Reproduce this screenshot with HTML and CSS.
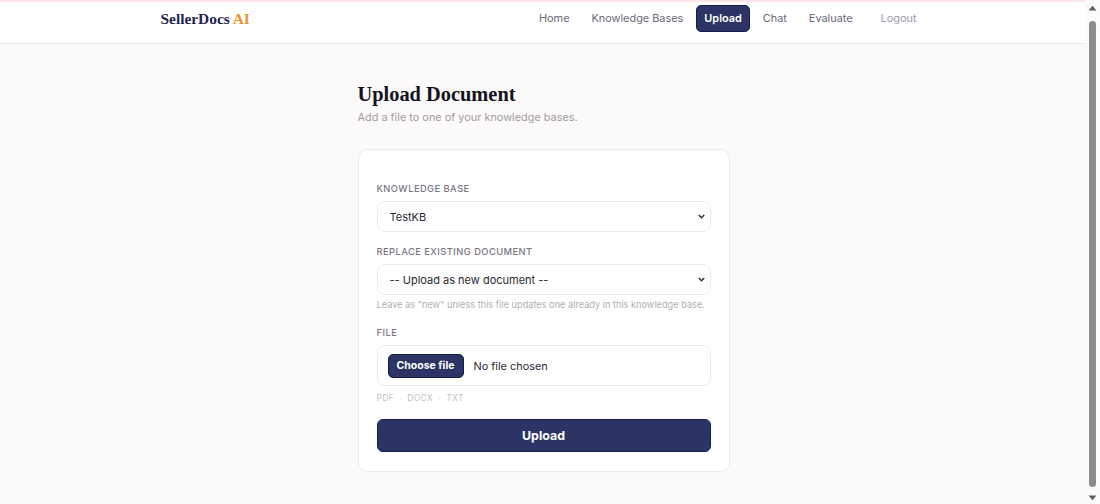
FILE: index.html
```html
<!DOCTYPE html>
<html lang="en">
<head>
<meta charset="utf-8">
<title>Upload Document - SellerDocs AI</title>
<link rel="stylesheet" href="styles.css">
</head>
<body>
<header class="site-header">
  <div class="container header-inner">
    <a class="logo" href="#">SellerDocs <span class="logo-ai">AI</span></a>
    <nav class="nav">
      <a class="nav-link" href="#">Home</a>
      <a class="nav-link" href="#">Knowledge Bases</a>
      <a class="nav-link active" href="#">Upload</a>
      <a class="nav-link" href="#">Chat</a>
      <a class="nav-link" href="#">Evaluate</a>
      <a class="nav-link logout" href="#">Logout</a>
    </nav>
  </div>
</header>
<main class="main">
  <div class="page">
    <h1 class="page-title">Upload Document</h1>
    <p class="page-sub">Add a file to one of your knowledge bases.</p>
    <form class="card">
      <div class="field field-first">
        <label class="label" for="kb">Knowledge base</label>
        <div class="select-wrap">
          <select id="kb" class="select"><option>TestKB</option></select>
          <svg class="chev" width="7" height="5" viewBox="0 0 7 5"><path d="M0.8 0.9 L3.5 3.7 L6.2 0.9" fill="none" stroke="#2a2a35" stroke-width="1.4"/></svg>
        </div>
      </div>
      <div class="field">
        <label class="label" for="rep">Replace existing document</label>
        <div class="select-wrap">
          <select id="rep" class="select"><option>-- Upload as new document --</option></select>
          <svg class="chev" width="7" height="5" viewBox="0 0 7 5"><path d="M0.8 0.9 L3.5 3.7 L6.2 0.9" fill="none" stroke="#2a2a35" stroke-width="1.4"/></svg>
        </div>
        <p class="help">Leave as "new" unless this file updates one already in this knowledge base.</p>
      </div>
      <div class="field field-file">
        <span class="label">File</span>
        <label class="file-box" for="file">
          <input id="file" class="file-input" type="file">
          <span class="file-btn">Choose file</span>
          <span class="file-name">No file chosen</span>
        </label>
        <p class="hint">PDF &nbsp;·&nbsp; DOCX &nbsp;·&nbsp; TXT</p>
      </div>
      <button type="button" class="submit">Upload</button>
    </form>
  </div>
</main>
<div class="fake-scrollbar" aria-hidden="true">
  <svg class="sb-arrow" width="9" height="6" viewBox="0 0 9 6"><path d="M0.5 5.5 L4.5 0.8 L8.5 5.5 Z" fill="#5f5f5f"/></svg>
  <div class="sb-thumb"></div>
  <svg class="sb-arrow" width="9" height="6" viewBox="0 0 9 6"><path d="M0.5 0.5 L4.5 5.2 L8.5 0.5 Z" fill="#5f5f5f"/></svg>
</div>
</body>
</html>
```
FILE: styles.css
```css
* { box-sizing: border-box; }
html, body { margin: 0; padding: 0; }
body {
  background: #fbf9fa;
  font-family: Inter, "Liberation Sans", sans-serif;
  color: #2a2a35;
  padding-right: 15px;
}
.container {
  max-width: 768px;
  margin: 0 auto;
}
.site-header {
  background: #ffffff;
  border-top: 2px solid #fde6ea;
  border-bottom: 1px solid #ece8ea;
  padding-bottom: 8px;
}
.header-inner {
  display: flex;
  align-items: center;
  justify-content: space-between;
  height: 33px;
}
.logo {
  font-family: "Liberation Serif", "DejaVu Serif", serif;
  font-weight: 700;
  font-size: 15.4px;
  color: #1f2352;
  text-decoration: none;
  padding-left: 2px;
}
.logo-ai { color: #e8952a; }
.nav {
  display: flex;
  align-items: center;
  gap: 4px;
  padding-right: 1px;
}
.nav-link {
  font-size: 10.9px;
  color: #6b6a7a;
  text-decoration: none;
  padding: 0 8px;
  line-height: 25px;
  border: 1px solid transparent;
  border-radius: 5px;
}
.nav-link.active {
  background: #2b3464;
  border-color: #161c4a;
  color: #ffffff;
  font-weight: 600;
  padding: 0 7px;
}
.nav-link.logout {
  margin-left: 6px;
  color: #9a98a6;
}
.main {
  padding: 36px 0 48px;
}
.page {
  width: 372px;
  margin: 0 auto;
  position: relative;
  left: 1px;
}
.page-title {
  font-family: "Liberation Serif", "DejaVu Serif", serif;
  font-weight: 700;
  font-size: 20.4px;
  line-height: 28px;
  margin: 0;
  color: #14141c;
}
.page-sub {
  margin: 0 0 23px;
  font-size: 10.9px;
  line-height: 18px;
  color: #a29ca3;
}
.card {
  background: #ffffff;
  border: 1px solid #efe9ec;
  border-radius: 10px;
  padding: 31px 18px 19px;
}
.field { margin-bottom: 13px; }
.field-first { margin-bottom: 12px; }
.field-file { margin-bottom: 14px; }
.label {
  display: block;
  font-size: 9.3px;
  line-height: 16px;
  text-transform: uppercase;
  letter-spacing: 0.05em;
  color: #7a7480;
  font-weight: 500;
  margin-bottom: 4px;
}
.select-wrap {
  position: relative;
}
.select {
  display: block;
  width: 100%;
  height: 31px;
  padding: 0 20px 0 12px;
  font-family: Inter, "Liberation Sans", sans-serif;
  font-size: 11px;
  color: #2a2a35;
  background: #ffffff;
  border: 1px solid #f0e8ec;
  border-radius: 8px;
  appearance: none;
  -webkit-appearance: none;
}
.chev {
  position: absolute;
  right: 6px;
  top: 13px;
  pointer-events: none;
}
.help {
  margin: 3px 0 0;
  font-size: 9.2px;
  line-height: 14px;
  color: #b3aeb5;
  white-space: nowrap;
}
.file-box {
  border: 1px solid #f0e8ec;
  border-radius: 8px;
  height: 41px;
  padding: 0 10px;
  display: flex;
  align-items: center;
  gap: 10px;
  cursor: pointer;
}
.file-input {
  display: none;
}
.file-btn {
  font-size: 10.5px;
  font-weight: 700;
  color: #ffffff;
  background: #2b3464;
  border: 1px solid #161c4a;
  border-radius: 5px;
  height: 24px;
  width: 76px;
  display: flex;
  align-items: center;
  justify-content: center;
}
.file-name {
  font-size: 10.9px;
  color: #2a2a35;
}
.hint {
  margin: 5px 0 0;
  font-size: 8.4px;
  line-height: 14px;
  letter-spacing: 0.04em;
  color: #c4bfc5;
}
.submit {
  display: block;
  width: 100%;
  height: 33px;
  background: #2b3464;
  border: 1px solid #161c4a;
  border-radius: 6px;
  color: #ffffff;
  font-family: Inter, "Liberation Sans", sans-serif;
  font-weight: 700;
  font-size: 12.4px;
}
.fake-scrollbar {
  position: fixed;
  top: 0;
  right: 0;
  width: 15px;
  height: 100vh;
  background: #fbfbfb;
  display: flex;
  flex-direction: column;
  align-items: center;
  justify-content: space-between;
  padding: 5px 0 3px;
}
.sb-thumb {
  width: 7px;
  flex: 1;
  margin: 10px 0 8px;
  background: #8b8b8b;
  border-radius: 4px;
}
```
